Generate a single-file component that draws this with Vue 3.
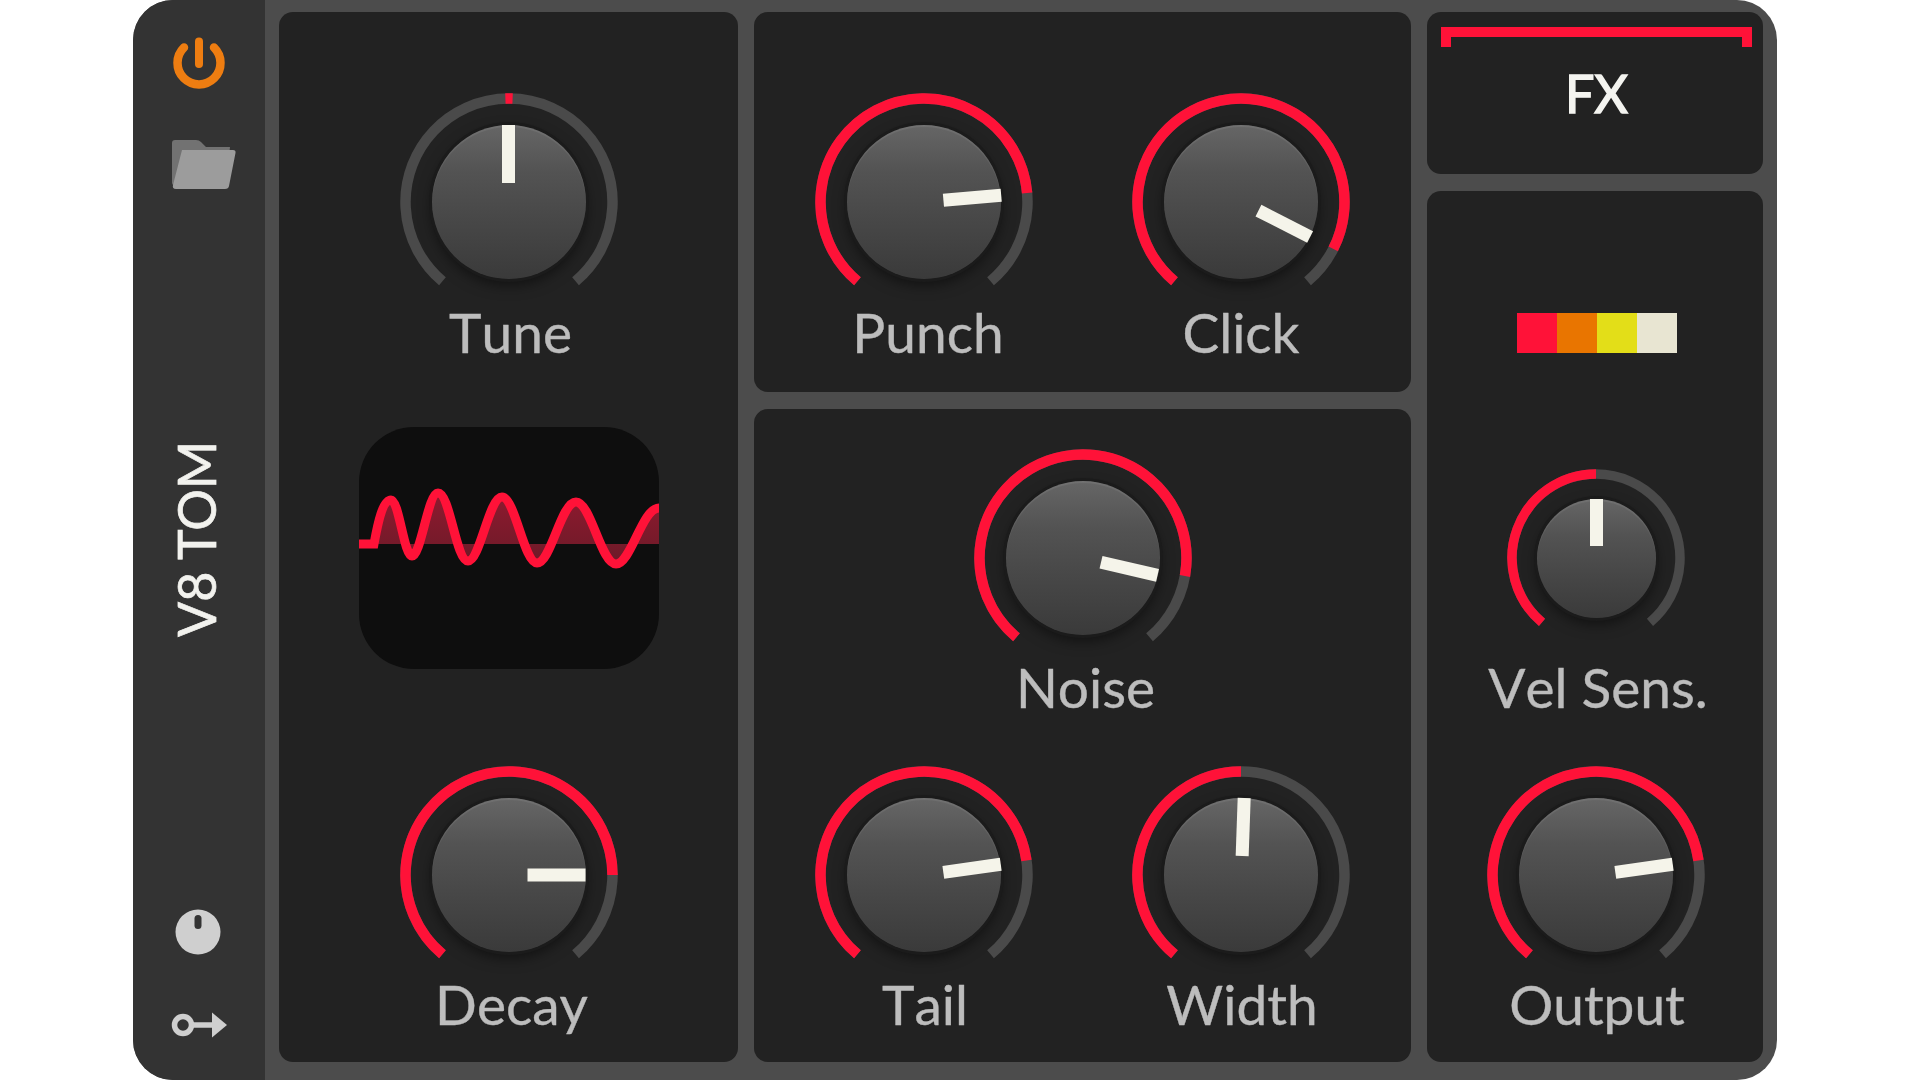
<script setup>
const START = -140;
const END = 140;
const SIZE = 218;
const SMALL = 178;

function polar(r, deg, c) {
  const a = ((deg - 90) * Math.PI) / 180;
  return `${(c + r * Math.cos(a)).toFixed(2)} ${(c + r * Math.sin(a)).toFixed(2)}`;
}

function arc(size, from, to) {
  const c = size / 2;
  const r = c - (size === SIZE ? 5.5 : 5);
  const large = to - from > 180 ? 1 : 0;
  return `M${polar(r, from, c)} A${r} ${r} 0 ${large} 1 ${polar(r, to, c)}`;
}

function nudge(knob) {
  return { transform: `translate(${knob.dx ?? 3}px, ${knob.dy ?? 0}px)` };
}

const tune = { label: "Tune", angle: 0, from: -2, to: 2, dx: 2 };
const decay = { label: "Decay", angle: 90, dy: -1 };
const topRow = [
  { label: "Punch", angle: 85, dx: 4 },
  { label: "Click", angle: 117, dx: 0 },
];
const noise = { label: "Noise", angle: 103, to: 100, dy: -1 };
const lowRow = [
  { label: "Tail", angle: 82, dy: -1, dx: 1 },
  { label: "Width", angle: 2, to: 0, dy: -1, dx: 1 },
];
const velSens = { label: "Vel Sens.", angle: 0, small: true, dx: 2 };
const output = { label: "Output", angle: 82, dy: -1, dx: 1 };

const swatches = ["#ff1238", "#e97500", "#e3de18", "#e8e5d2"];
</script>

<template>
  <div class="device">
    <aside class="sidebar">
      <svg class="power" width="52" height="52" viewBox="0 0 52 52">
        <path d="M11 10.5 A21.5 21.5 0 1 0 41 10.5" />
        <path class="stem" d="M26 4.5 V27" />
      </svg>
      <svg class="folder" width="64" height="52" viewBox="0 0 64 52">
        <path d="M3 1 H24 Q27 1 29 3 L34 8 H58 L54 46 H2 Q0 46 0 44 V4 Q0 1 3 1 Z" fill="#727272" />
        <path d="M10 11 H25 L32 11 L35 11 H61 Q64 11 63.5 14 L57 47 Q56.5 50 53 50 H4 Q0 50 1 46 Z" fill="#9c9c9c" />
      </svg>
      <div class="title">V8 TOM</div>
      <svg class="mini-knob" width="46" height="46" viewBox="0 0 46 46">
        <circle cx="23" cy="23" r="22.5" fill="#cfcfcf" />
        <rect x="19.5" y="6" width="7" height="14" rx="3.5" fill="#333" />
      </svg>
      <svg class="routing" width="56" height="28" viewBox="0 0 56 28">
        <circle cx="12" cy="14" r="8.5" fill="none" stroke="#cfcfcf" stroke-width="5.5" />
        <path d="M20 14 H44" stroke="#cfcfcf" stroke-width="5.5" />
        <path d="M41 1.5 L56 14 L41 26.5 Z" fill="#cfcfcf" />
      </svg>
    </aside>

    <main class="rack">
      <section class="panel col-one">
        <div v-for="knob in [tune]" :key="knob.label" class="knob">
          <div class="dial-wrap">
            <svg :width="SIZE" :height="SIZE" class="ring">
              <path :d="arc(SIZE, START, END)" class="track" />
              <path :d="arc(SIZE, knob.from, knob.to)" class="value" />
            </svg>
            <div class="cap">
              <span class="needle" :style="{ transform: `rotate(${knob.angle}deg)` }"></span>
            </div>
          </div>
          <span class="label" :style="nudge(knob)">{{ knob.label }}</span>
        </div>

        <div class="scope">
          <svg width="300" height="242" viewBox="0 0 300 242">
            <defs>
              <linearGradient id="wave" x1="0" y1="0" x2="0" y2="1">
                <stop offset="0" stop-color="#8f1a2f" />
                <stop offset="1" stop-color="#6c1a28" />
              </linearGradient>
            </defs>
            <path
              d="M15 117 C19 95 24 73 32 73 C40 73 45 129 53 129 C62 129 69 66 79 66 C91 66 97 134 109 134 C121 134 130 70 143 70 C156 70 165 136 178 136 C192 136 202 75 217 75 C232 75 242 137 257 137 C272 137 283 81 300 81 V117 Z"
              fill="url(#wave)"
            />
            <path
              d="M0 117 H15 C19 95 24 73 32 73 C40 73 45 129 53 129 C62 129 69 66 79 66 C91 66 97 134 109 134 C121 134 130 70 143 70 C156 70 165 136 178 136 C192 136 202 75 217 75 C232 75 242 137 257 137 C272 137 283 81 300 81"
              fill="none"
              stroke="#ff1238"
              stroke-width="9"
            />
          </svg>
        </div>

        <div v-for="knob in [decay]" :key="knob.label" class="knob">
          <div class="dial-wrap">
            <svg :width="SIZE" :height="SIZE" class="ring">
              <path :d="arc(SIZE, START, END)" class="track" />
              <path :d="arc(SIZE, START, knob.to ?? knob.angle)" class="value" />
            </svg>
            <div class="cap">
              <span class="needle" :style="{ transform: `rotate(${knob.angle}deg)` }"></span>
            </div>
          </div>
          <span class="label" :style="nudge(knob)">{{ knob.label }}</span>
        </div>
      </section>

      <div class="col-two">
        <section class="panel top-panel">
          <div class="row">
            <div v-for="knob in topRow" :key="knob.label" class="knob">
              <div class="dial-wrap">
                <svg :width="SIZE" :height="SIZE" class="ring">
                  <path :d="arc(SIZE, START, END)" class="track" />
                  <path :d="arc(SIZE, START, knob.to ?? knob.angle)" class="value" />
                </svg>
                <div class="cap">
                  <span class="needle" :style="{ transform: `rotate(${knob.angle}deg)` }"></span>
                </div>
              </div>
              <span class="label" :style="nudge(knob)">{{ knob.label }}</span>
            </div>
          </div>
        </section>

        <section class="panel low-panel">
          <div v-for="knob in [noise]" :key="knob.label" class="knob">
            <div class="dial-wrap">
              <svg :width="SIZE" :height="SIZE" class="ring">
                <path :d="arc(SIZE, START, END)" class="track" />
                <path :d="arc(SIZE, START, knob.to ?? knob.angle)" class="value" />
              </svg>
              <div class="cap">
                <span class="needle" :style="{ transform: `rotate(${knob.angle}deg)` }"></span>
              </div>
            </div>
            <span class="label" :style="nudge(knob)">{{ knob.label }}</span>
          </div>
          <div class="row low-row">
            <div v-for="knob in lowRow" :key="knob.label" class="knob">
              <div class="dial-wrap">
                <svg :width="SIZE" :height="SIZE" class="ring">
                  <path :d="arc(SIZE, START, END)" class="track" />
                  <path :d="arc(SIZE, START, knob.to ?? knob.angle)" class="value" />
                </svg>
                <div class="cap">
                  <span class="needle" :style="{ transform: `rotate(${knob.angle}deg)` }"></span>
                </div>
              </div>
              <span class="label" :style="nudge(knob)">{{ knob.label }}</span>
            </div>
          </div>
        </section>
      </div>

      <div class="col-three">
        <section class="panel fx">
          <span class="bracket"></span>
          <span class="fx-text">FX</span>
        </section>

        <section class="panel out-panel">
          <div class="swatches">
            <span v-for="c in swatches" :key="c" :style="{ background: c }"></span>
          </div>

          <div v-for="knob in [velSens]" :key="knob.label" class="knob small">
            <div class="dial-wrap">
              <svg :width="SMALL" :height="SMALL" class="ring">
                <path :d="arc(SMALL, START, END)" class="track" />
                <path :d="arc(SMALL, START, knob.angle)" class="value" />
              </svg>
              <div class="cap">
                <span class="needle" :style="{ transform: `rotate(${knob.angle}deg)` }"></span>
              </div>
            </div>
            <span class="label" :style="nudge(knob)">{{ knob.label }}</span>
          </div>

          <div v-for="knob in [output]" :key="knob.label" class="knob output">
            <div class="dial-wrap">
              <svg :width="SIZE" :height="SIZE" class="ring">
                <path :d="arc(SIZE, START, END)" class="track" />
                <path :d="arc(SIZE, START, knob.angle)" class="value" />
              </svg>
              <div class="cap">
                <span class="needle" :style="{ transform: `rotate(${knob.angle}deg)` }"></span>
              </div>
            </div>
            <span class="label" :style="nudge(knob)">{{ knob.label }}</span>
          </div>
        </section>
      </div>
    </main>
  </div>
</template>

<style>
html,
body {
  margin: 0;
  background: #fff;
}
</style>

<style scoped>
.device {
  width: 1644px;
  height: 1080px;
  margin-left: 133px;
  display: flex;
  border-radius: 40px;
  overflow: hidden;
  background: #4c4c4c;
  font-family: Lato, "Open Sans", sans-serif;
}

.sidebar {
  width: 132px;
  flex: none;
  background: #333;
  display: flex;
  flex-direction: column;
  align-items: flex-start;
  padding-top: 37px;
  box-sizing: border-box;
}

.power {
  margin-left: 40px;
}

.power path {
  fill: none;
  stroke: #ee7d11;
  stroke-width: 8.5;
  stroke-linecap: round;
}

.power .stem {
  stroke-width: 8;
}

.folder {
  margin: 50px 0 0 39px;
}

.title {
  margin: 250px 0 0 37px;
  height: 196px;
  writing-mode: vertical-rl;
  transform: rotate(180deg);
  font-size: 52px;
  line-height: 52px;
  -webkit-text-stroke: 0.7px #f2f2ee;
  white-space: nowrap;
  color: #f2f2ee;
}

.mini-knob {
  margin: 272px 0 0 42px;
}

.routing {
  margin: 56px 0 0 38px;
}

.rack {
  flex: 1;
  display: flex;
  gap: 16px;
  padding: 12px 14px 18px;
  box-sizing: border-box;
}

.panel {
  background: #222;
  border-radius: 14px;
  box-sizing: border-box;
}

.col-one {
  width: 459px;
  padding-top: 81px;
  display: flex;
  flex-direction: column;
  align-items: center;
}

.scope {
  width: 300px;
  height: 242px;
  margin: 73px 0 97px;
  border-radius: 55px;
  overflow: hidden;
  background: #0e0e0e;
}

.scope svg {
  display: block;
}

.col-two {
  width: 657px;
  display: flex;
  flex-direction: column;
  gap: 17px;
}

.top-panel {
  height: 380px;
  padding-top: 81px;
}

.low-panel {
  flex: 1;
  padding-top: 40px;
  display: flex;
  flex-direction: column;
  align-items: center;
}

.row {
  display: flex;
  justify-content: center;
  gap: 99px;
}

.low-row {
  margin-top: 56px;
}

.col-three {
  width: 336px;
  display: flex;
  flex-direction: column;
  gap: 17px;
}

.fx {
  height: 162px;
  padding: 15px 11px 0 14px;
  display: flex;
  flex-direction: column;
  align-items: center;
}

.bracket {
  width: 100%;
  height: 20px;
  box-sizing: border-box;
  border: 10px solid #ff1238;
  border-bottom: none;
}

.fx-text {
  margin-top: 15px;
  font-size: 52px;
  line-height: 62px;
  -webkit-text-stroke: 1.5px #f4f4f0;
  color: #f4f4f0;
}

.out-panel {
  flex: 1;
  padding: 122px 0 0 2px;
  display: flex;
  flex-direction: column;
  align-items: center;
}

.swatches {
  display: flex;
  margin: 0 0 116px 2px;
}

.swatches span {
  width: 40px;
  height: 40px;
}

.output {
  margin-top: 57px;
}

.knob {
  width: 218px;
  display: flex;
  flex-direction: column;
  align-items: center;
}

.dial-wrap {
  position: relative;
  width: 218px;
  height: 218px;
}

.small .dial-wrap {
  width: 178px;
  height: 178px;
}

.ring {
  display: block;
}

.track,
.value {
  fill: none;
  stroke-width: 10.5;
}

.small .track,
.small .value {
  stroke-width: 9.5;
}

.track {
  stroke: #4a4a4a;
}

.value {
  stroke: #ff1238;
}

.cap {
  position: absolute;
  left: 32px;
  top: 32px;
  width: 154px;
  height: 154px;
  border-radius: 50%;
  background: linear-gradient(180deg, #666 0%, #535353 30%, #484848 60%, #3a3a3a 100%);
  box-shadow: inset 0 2px 1px rgba(255, 255, 255, 0.08), 0 0 0 3px #1b1b1b, 0 6px 14px rgba(0, 0, 0, 0.5);
}

.small .cap {
  left: 29.5px;
  top: 29.5px;
  width: 119px;
  height: 119px;
}

.needle {
  position: absolute;
  left: 70.5px;
  top: 0;
  width: 13px;
  height: 77px;
  transform-origin: 6.5px 77px;
}

.needle::before {
  content: "";
  position: absolute;
  left: 0;
  top: 0;
  width: 13px;
  height: 58px;
  background: #f5f4ea;
}

.small .needle {
  left: 53px;
  height: 59.5px;
  transform-origin: 6.5px 59.5px;
}

.small .needle::before {
  height: 47px;
}

.label {
  margin-top: -1px;
  font-size: 55px;
  line-height: 44px;
  font-kerning: none;
  white-space: nowrap;
  color: #bdbdbd;
  -webkit-text-stroke: 0.4px #bdbdbd;
}

.small .label {
  margin-top: 18px;
}
</style>
